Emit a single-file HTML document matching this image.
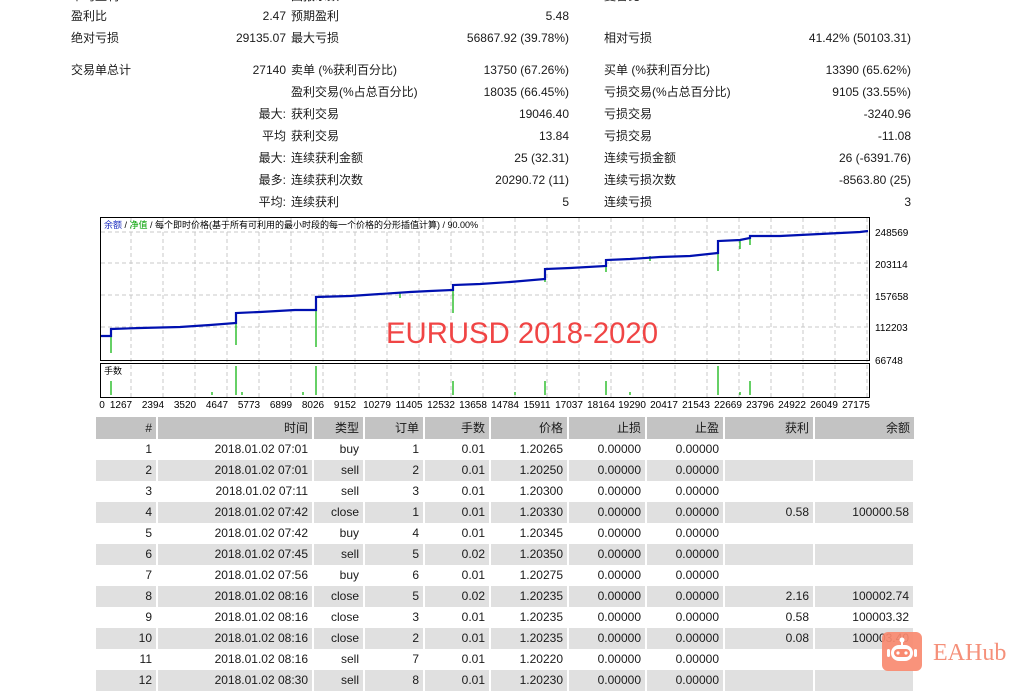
<!DOCTYPE html>
<html><head><meta charset="utf-8"><style>
body{margin:0;width:1021px;height:677px;overflow:hidden;background:#fff;font-family:"Liberation Sans","Noto Sans CJK SC",sans-serif;font-size:12px;color:#1a1a1a;position:relative}
.t{position:absolute;white-space:nowrap;line-height:16px}
.r{text-align:right}
table{position:absolute;left:96px;top:417px;border-collapse:collapse;font-size:12px}
td{height:21px;padding:0 4px 0 0;text-align:right;border-right:2px solid #fff;white-space:nowrap;line-height:21px}
tr.h td{background:#c3c3c3;height:22px}
tr.g td{background:#e0e0e0}
</style></head><body>
<div class="t" style="left:71px;top:-12px">平均盈利</div>
<div class="t" style="left:291px;top:-12px">回报系数</div>
<div class="t" style="left:604px;top:-12px">夏普比</div>

<div class="t" style="left:71px;top:8px">盈利比</div>
<div class="t r" style="right:735px;top:8px">2.47</div>
<div class="t" style="left:291px;top:8px">预期盈利</div>
<div class="t r" style="right:452px;top:8px">5.48</div>

<div class="t" style="left:71px;top:30px">绝对亏损</div>
<div class="t r" style="right:735px;top:30px">29135.07</div>
<div class="t" style="left:291px;top:30px">最大亏损</div>
<div class="t r" style="right:452px;top:30px">56867.92 (39.78%)</div>
<div class="t" style="left:604px;top:30px">相对亏损</div>
<div class="t r" style="right:110px;top:30px">41.42% (50103.31)</div>

<div class="t" style="left:71px;top:62px">交易单总计</div>
<div class="t r" style="right:735px;top:62px">27140</div>
<div class="t" style="left:291px;top:62px">卖单 (%获利百分比)</div>
<div class="t r" style="right:452px;top:62px">13750 (67.26%)</div>
<div class="t" style="left:604px;top:62px">买单 (%获利百分比)</div>
<div class="t r" style="right:110px;top:62px">13390 (65.62%)</div>

<div class="t" style="left:291px;top:84px">盈利交易(%占总百分比)</div>
<div class="t r" style="right:452px;top:84px">18035 (66.45%)</div>
<div class="t" style="left:604px;top:84px">亏损交易(%占总百分比)</div>
<div class="t r" style="right:110px;top:84px">9105 (33.55%)</div>

<div class="t r" style="right:735px;top:106px">最大:</div>
<div class="t" style="left:291px;top:106px">获利交易</div>
<div class="t r" style="right:452px;top:106px">19046.40</div>
<div class="t" style="left:604px;top:106px">亏损交易</div>
<div class="t r" style="right:110px;top:106px">-3240.96</div>

<div class="t r" style="right:735px;top:128px">平均</div>
<div class="t" style="left:291px;top:128px">获利交易</div>
<div class="t r" style="right:452px;top:128px">13.84</div>
<div class="t" style="left:604px;top:128px">亏损交易</div>
<div class="t r" style="right:110px;top:128px">-11.08</div>

<div class="t r" style="right:735px;top:150px">最大:</div>
<div class="t" style="left:291px;top:150px">连续获利金额</div>
<div class="t r" style="right:452px;top:150px">25 (32.31)</div>
<div class="t" style="left:604px;top:150px">连续亏损金额</div>
<div class="t r" style="right:110px;top:150px">26 (-6391.76)</div>

<div class="t r" style="right:735px;top:172px">最多:</div>
<div class="t" style="left:291px;top:172px">连续获利次数</div>
<div class="t r" style="right:452px;top:172px">20290.72 (11)</div>
<div class="t" style="left:604px;top:172px">连续亏损次数</div>
<div class="t r" style="right:110px;top:172px">-8563.80 (25)</div>

<div class="t r" style="right:735px;top:194px">平均:</div>
<div class="t" style="left:291px;top:194px">连续获利</div>
<div class="t r" style="right:452px;top:194px">5</div>
<div class="t" style="left:604px;top:194px">连续亏损</div>
<div class="t r" style="right:110px;top:194px">3</div>

<svg style="position:absolute;left:0;top:0" width="1021" height="417" font-family="Liberation Sans, Noto Sans CJK SC, sans-serif">
<g stroke="#c8c8c8" stroke-dasharray="4,3" stroke-width="1">
<line x1="101" y1="232" x2="869" y2="232"/><line x1="101" y1="263" x2="869" y2="263"/><line x1="101" y1="295" x2="869" y2="295"/><line x1="101" y1="327" x2="869" y2="327"/>
<line x1="131" y1="218" x2="131" y2="397"/><line x1="163" y1="218" x2="163" y2="397"/><line x1="195" y1="218" x2="195" y2="397"/><line x1="227" y1="218" x2="227" y2="397"/><line x1="259" y1="218" x2="259" y2="397"/><line x1="291" y1="218" x2="291" y2="397"/><line x1="323" y1="218" x2="323" y2="397"/><line x1="355" y1="218" x2="355" y2="397"/><line x1="387" y1="218" x2="387" y2="397"/><line x1="419" y1="218" x2="419" y2="397"/><line x1="451" y1="218" x2="451" y2="397"/><line x1="483" y1="218" x2="483" y2="397"/><line x1="515" y1="218" x2="515" y2="397"/><line x1="547" y1="218" x2="547" y2="397"/><line x1="579" y1="218" x2="579" y2="397"/><line x1="611" y1="218" x2="611" y2="397"/><line x1="643" y1="218" x2="643" y2="397"/><line x1="675" y1="218" x2="675" y2="397"/><line x1="707" y1="218" x2="707" y2="397"/><line x1="739" y1="218" x2="739" y2="397"/><line x1="771" y1="218" x2="771" y2="397"/><line x1="803" y1="218" x2="803" y2="397"/><line x1="835" y1="218" x2="835" y2="397"/><line x1="867" y1="218" x2="867" y2="397"/>
</g>
<rect x="100.5" y="217.5" width="769" height="143" fill="none" stroke="#000"/>
<rect x="100.5" y="363.5" width="769" height="34" fill="none" stroke="#000"/>
<g stroke="#00b000" stroke-width="1.2">
<line x1="111" y1="330" x2="111" y2="353"/><line x1="236" y1="314" x2="236" y2="345"/><line x1="316" y1="298" x2="316" y2="347"/><line x1="453" y1="290" x2="453" y2="313"/><line x1="545" y1="270" x2="545" y2="282"/><line x1="606" y1="262" x2="606" y2="272"/><line x1="718" y1="246" x2="718" y2="271"/><line x1="740" y1="240" x2="740" y2="249"/><line x1="750" y1="237" x2="750" y2="245"/><line x1="400" y1="292" x2="400" y2="298"/><line x1="650" y1="256" x2="650" y2="261"/>
<line x1="111" y1="381" x2="111" y2="395"/><line x1="236" y1="366" x2="236" y2="395"/><line x1="316" y1="366" x2="316" y2="395"/><line x1="453" y1="381" x2="453" y2="395"/><line x1="545" y1="381" x2="545" y2="395"/><line x1="606" y1="381" x2="606" y2="395"/><line x1="718" y1="366" x2="718" y2="395"/><line x1="750" y1="381" x2="750" y2="395"/><line x1="212" y1="392" x2="212" y2="395"/><line x1="242" y1="392" x2="242" y2="395"/><line x1="303" y1="392" x2="303" y2="395"/><line x1="515" y1="392" x2="515" y2="395"/><line x1="630" y1="392" x2="630" y2="395"/><line x1="740" y1="392" x2="740" y2="395"/>
</g>
<polyline fill="none" stroke="#0010b0" stroke-width="2.2" points="101,336 111,336 111,329 140,328 180,327 210,325 236,323 236,313 260,312 295,310 316,310 316,297 350,296 380,294 410,292 430,291 453,290 453,285 480,284 510,282 545,279 545,269 570,268 606,266 606,260 630,259 660,257 690,256 718,253 718,241 740,240 750,238 750,236 780,236 820,234 860,232 868,231"/>
<text x="104" y="228" font-size="9"><tspan fill="#2030c0">余额</tspan><tspan fill="#000"> / </tspan><tspan fill="#00a000">净值</tspan><tspan fill="#000"> / 每个即时价格(基于所有可利用的最小时段的每一个价格的分形插值计算) / 90.00%</tspan></text>
<text x="104" y="374" font-size="9">手数</text>
<text x="386" y="343" font-size="30" textLength="272" lengthAdjust="spacingAndGlyphs" fill="#f04545">EURUSD 2018-2020</text>
<g font-size="10" fill="#000"><text x="875" y="236">248569</text><text x="875" y="268">203114</text><text x="875" y="300">157658</text><text x="875" y="331">112203</text><text x="875" y="364">66748</text></g>
<g font-size="10" fill="#000" text-anchor="middle"><text x="102" y="408">0</text><text x="121" y="408">1267</text><text x="153" y="408">2394</text><text x="185" y="408">3520</text><text x="217" y="408">4647</text><text x="249" y="408">5773</text><text x="281" y="408">6899</text><text x="313" y="408">8026</text><text x="345" y="408">9152</text><text x="377" y="408">10279</text><text x="409" y="408">11405</text><text x="441" y="408">12532</text><text x="473" y="408">13658</text><text x="505" y="408">14784</text><text x="537" y="408">15911</text><text x="569" y="408">17037</text><text x="601" y="408">18164</text><text x="632" y="408">19290</text><text x="664" y="408">20417</text><text x="696" y="408">21543</text><text x="728" y="408">22669</text><text x="760" y="408">23796</text><text x="792" y="408">24922</text><text x="824" y="408">26049</text><text x="856" y="408">27175</text></g>
</svg>

<table>
<colgroup><col style="width:61px"><col style="width:156px"><col style="width:51px"><col style="width:60px"><col style="width:66px"><col style="width:78px"><col style="width:78px"><col style="width:78px"><col style="width:90px"><col style="width:100px"></colgroup>
<tr class="h"><td>#</td><td>时间</td><td>类型</td><td>订单</td><td>手数</td><td>价格</td><td>止损</td><td>止盈</td><td>获利</td><td style="border-right:0">余额</td></tr>
<tr><td>1</td><td>2018.01.02 07:01</td><td>buy</td><td>1</td><td>0.01</td><td>1.20265</td><td>0.00000</td><td>0.00000</td><td></td><td></td></tr>
<tr class="g"><td>2</td><td>2018.01.02 07:01</td><td>sell</td><td>2</td><td>0.01</td><td>1.20250</td><td>0.00000</td><td>0.00000</td><td></td><td></td></tr>
<tr><td>3</td><td>2018.01.02 07:11</td><td>sell</td><td>3</td><td>0.01</td><td>1.20300</td><td>0.00000</td><td>0.00000</td><td></td><td></td></tr>
<tr class="g"><td>4</td><td>2018.01.02 07:42</td><td>close</td><td>1</td><td>0.01</td><td>1.20330</td><td>0.00000</td><td>0.00000</td><td>0.58</td><td>100000.58</td></tr>
<tr><td>5</td><td>2018.01.02 07:42</td><td>buy</td><td>4</td><td>0.01</td><td>1.20345</td><td>0.00000</td><td>0.00000</td><td></td><td></td></tr>
<tr class="g"><td>6</td><td>2018.01.02 07:45</td><td>sell</td><td>5</td><td>0.02</td><td>1.20350</td><td>0.00000</td><td>0.00000</td><td></td><td></td></tr>
<tr><td>7</td><td>2018.01.02 07:56</td><td>buy</td><td>6</td><td>0.01</td><td>1.20275</td><td>0.00000</td><td>0.00000</td><td></td><td></td></tr>
<tr class="g"><td>8</td><td>2018.01.02 08:16</td><td>close</td><td>5</td><td>0.02</td><td>1.20235</td><td>0.00000</td><td>0.00000</td><td>2.16</td><td>100002.74</td></tr>
<tr><td>9</td><td>2018.01.02 08:16</td><td>close</td><td>3</td><td>0.01</td><td>1.20235</td><td>0.00000</td><td>0.00000</td><td>0.58</td><td>100003.32</td></tr>
<tr class="g"><td>10</td><td>2018.01.02 08:16</td><td>close</td><td>2</td><td>0.01</td><td>1.20235</td><td>0.00000</td><td>0.00000</td><td>0.08</td><td>100003.40</td></tr>
<tr><td>11</td><td>2018.01.02 08:16</td><td>sell</td><td>7</td><td>0.01</td><td>1.20220</td><td>0.00000</td><td>0.00000</td><td></td><td></td></tr>
<tr class="g"><td>12</td><td>2018.01.02 08:30</td><td>sell</td><td>8</td><td>0.01</td><td>1.20230</td><td>0.00000</td><td>0.00000</td><td></td><td></td></tr>
</table>

<svg style="position:absolute;left:882px;top:632px" width="40" height="39">
<rect width="40" height="39" rx="6" fill="#f98a70" opacity="0.92"/>
<circle cx="20" cy="8" r="2.5" fill="#fff"/><line x1="20" y1="9" x2="20" y2="13" stroke="#fff" stroke-width="2"/>
<rect x="9" y="13" width="22" height="16" rx="8" fill="#fff"/>
<rect x="5" y="17" width="3" height="8" rx="1.5" fill="#fff"/><rect x="32" y="17" width="3" height="8" rx="1.5" fill="#fff"/>
<rect x="12" y="17" width="16" height="8" rx="4" fill="#f98a70"/>
<circle cx="16" cy="21" r="1.6" fill="#fff"/><circle cx="24" cy="21" r="1.6" fill="#fff"/>
</svg>
<div class="t" style="left:933px;top:638px;font-family:'Liberation Serif','DejaVu Serif',serif;font-size:24px;line-height:30px;color:#f5907a">EAHub</div>
</body></html>
